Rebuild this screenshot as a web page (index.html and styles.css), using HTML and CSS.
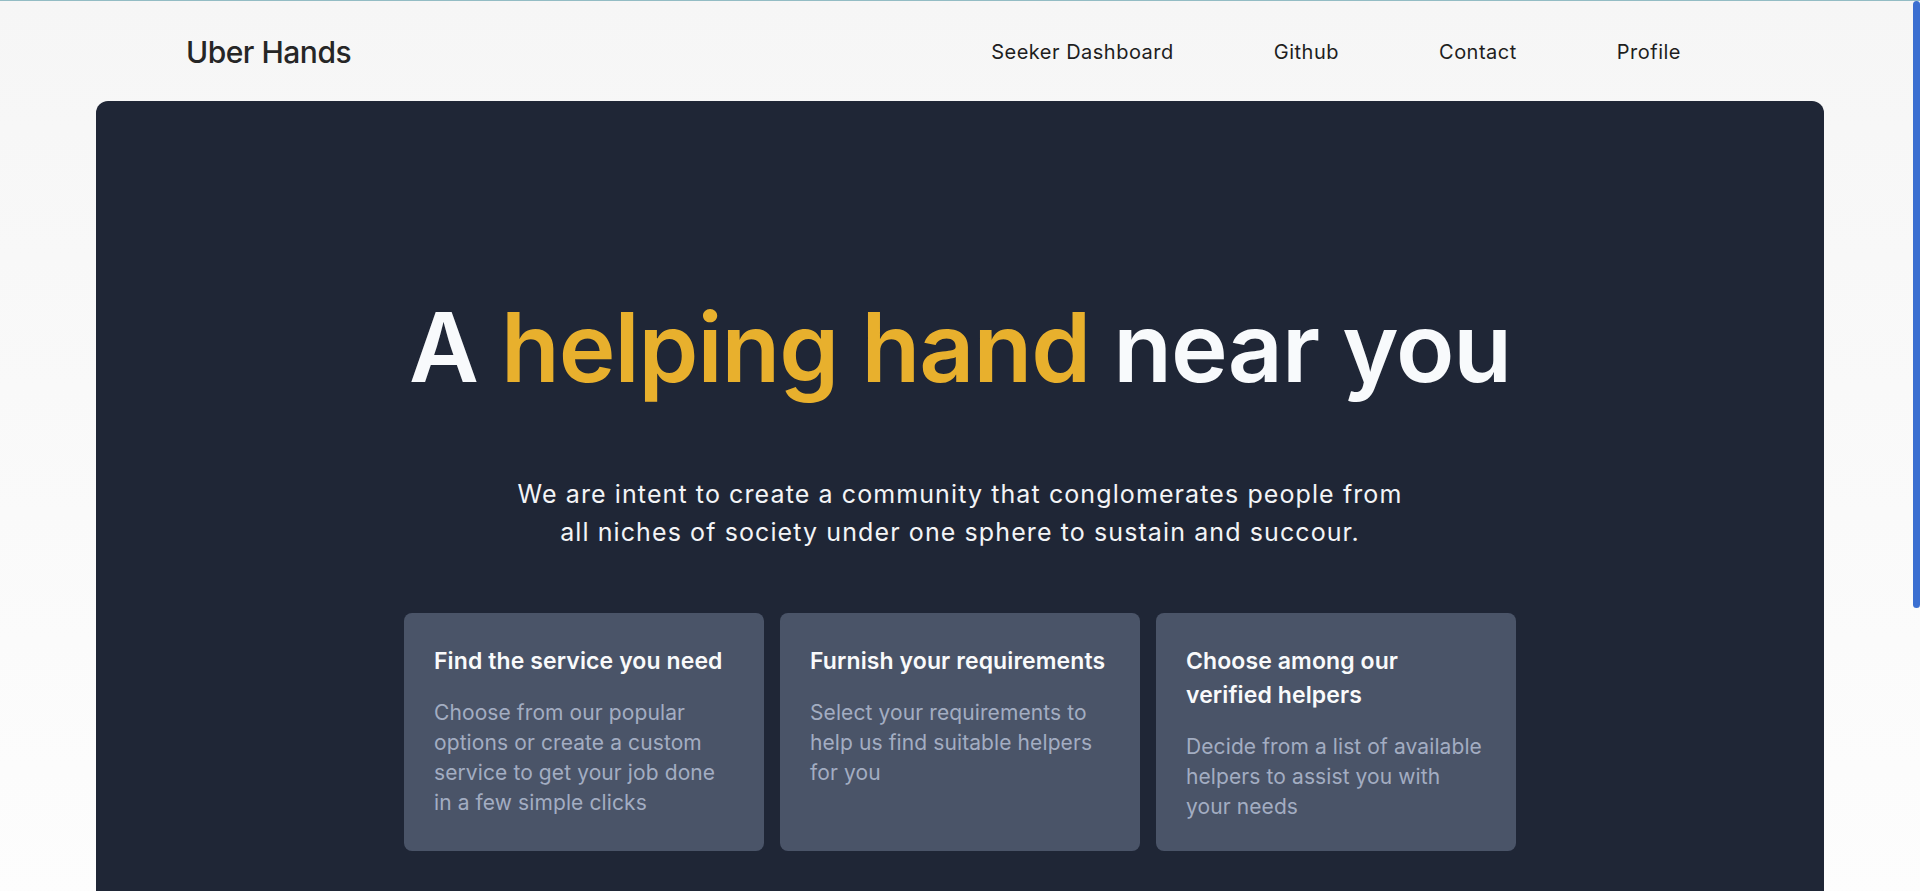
FILE: index.html
```html
<!DOCTYPE html>
<html lang="en">
<head>
<meta charset="utf-8">
<title>Uber Hands</title>
<link rel="stylesheet" href="styles.css">
</head>
<body>
<header class="site-header">
  <a class="brand" href="#">Uber Hands</a>
  <nav class="nav">
    <a href="#">Seeker Dashboard</a>
    <a href="#">Github</a>
    <a href="#">Contact</a>
    <a href="#">Profile</a>
  </nav>
</header>
<main class="hero">
  <h1 class="hero-title">A <span class="accent">helping hand</span> near you</h1>
  <p class="hero-text">We are intent to create a community that conglomerates people from all niches of society under one sphere to sustain and succour.</p>
  <section class="steps">
    <article class="step">
      <h2 class="step-title">Find the service you need</h2>
      <p class="step-text">Choose from our popular options or create a custom service to get your job done in a few simple clicks</p>
    </article>
    <article class="step">
      <h2 class="step-title">Furnish your requirements</h2>
      <p class="step-text">Select your requirements to help us find suitable helpers for you</p>
    </article>
    <article class="step">
      <h2 class="step-title">Choose among our verified helpers</h2>
      <p class="step-text">Decide from a list of available helpers to assist you with your needs</p>
    </article>
  </section>
</main>
<div class="scroll-thumb" aria-hidden="true"></div>
</body>
</html>
```
FILE: styles.css
```css
html {
  scrollbar-width: none;
}
html::-webkit-scrollbar {
  width: 0;
  height: 0;
}
body {
  margin: 0;
  border-top: 1px solid #93bcc4;
  background: linear-gradient(#f6f6f6, #fdfdfd 900px);
  font-family: "Inter", "Noto Sans", sans-serif;
  color: #222;
}
a {
  color: inherit;
  text-decoration: none;
}
.site-header {
  height: 100px;
  display: flex;
  align-items: center;
  justify-content: space-between;
  padding: 0 239px 0 186px;
}
.brand {
  font-size: 30px;
  font-weight: 500;
  letter-spacing: -0.5px;
  color: #262626;
  padding-top: 2px;
}
.nav {
  display: flex;
  gap: 100px;
  font-size: 20px;
  letter-spacing: 0.5px;
  color: #1e1e1e;
  padding-top: 2px;
}
.hero {
  margin: 0 5%;
  background: #1f2636;
  border-radius: 12px;
  padding: 198px 0 410px;
  display: flex;
  flex-direction: column;
  align-items: center;
}
.hero-title {
  margin: 0;
  font-size: 96px;
  line-height: 96px;
  font-weight: 600;
  letter-spacing: -1px;
  color: #f8fafc;
}
.accent {
  color: #e8b02d;
}
.hero-text {
  margin: 80px 0 0;
  max-width: 900px;
  text-align: center;
  font-size: 25px;
  line-height: 38.4px;
  letter-spacing: 1.1px;
  color: #f3f4f6;
}
.steps {
  margin-top: 61px;
  width: 1112px;
  display: grid;
  grid-template-columns: repeat(3, 1fr);
  gap: 16px;
}
.step {
  background: #4a5468;
  border-radius: 8px;
  padding: 31px 30px 29px 30px;
}
.step-title {
  margin: 0 0 20px;
  font-size: 23px;
  line-height: 34px;
  font-weight: 600;
  letter-spacing: 0.1px;
  color: #f9fafb;
}
.step-text {
  margin: 0;
  font-size: 21px;
  line-height: 30px;
  letter-spacing: 0.1px;
  color: #a3adc2;
}
.scroll-thumb {
  position: fixed;
  top: 1px;
  right: 0;
  width: 7px;
  height: 607px;
  border-radius: 4px;
  background: #3b6fd1;
}
```
